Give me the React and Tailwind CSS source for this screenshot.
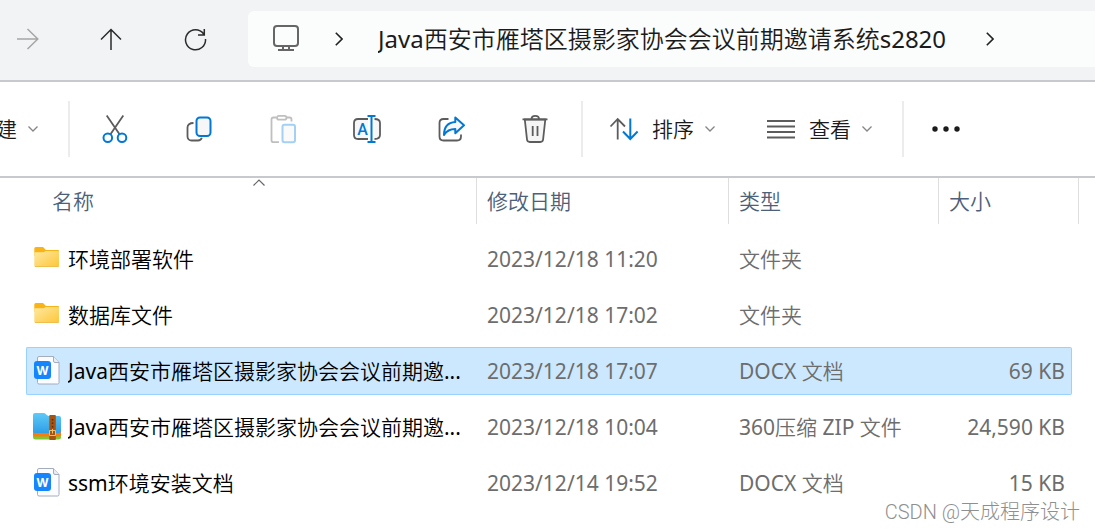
import { useState } from "react";
import clsx from "clsx";

const FolderIcon = () => (
  <svg className="h-[30px] w-7 shrink-0" viewBox="0 0 28 30" fill="none">
    <defs>
      <linearGradient id="folder" x1="0" y1="0" x2="1" y2="1">
        <stop offset="0" stopColor="#ffe9a2" />
        <stop offset="1" stopColor="#fcc638" />
      </linearGradient>
    </defs>
    <path d="M1.300 4.500Q1.300 3 2.800 3H10l3 3h12q1 0 1 1v5H1.300z" fill="#f8b316" />
    <path d="M1.300 9.300q0-1 1-1h8.200L13 7h12q1 0 1 1v13.500q0 1.500-1.500 1.500H2.800q-1.500 0-1.500-1.500z" fill="url(#folder)" />
    <path d="M2 22.500h23.500" stroke="#efbe4d" />
  </svg>
);

const DocxIcon = () => (
  <svg className="h-[30px] w-7 shrink-0" viewBox="0 0 28 30" fill="none">
    <path d="M6 .500h14.500L26 6.500v20q0 1.500-1.500 1.500H6q-1.500 0-1.500-1.500V2Q4.500.500 6 .500z" fill="#fbfcff" stroke="#a4adbd" />
    <path d="M20.500.500V5q0 1.500 1.500 1.500h4" fill="#e8ecf4" stroke="#a4adbd" />
    <rect x="1" y="5" width="17" height="18" rx="3" fill="#1485fc" />
    <text x="9.500" y="18.500" textAnchor="middle" fontFamily="Inter, sans-serif" fontSize="12" fontWeight="700" fill="#fff">
      W
    </text>
  </svg>
);

const ZipIcon = () => (
  <svg className="h-[30px] w-7 shrink-0" viewBox="0 0 28 30" fill="none">
    <defs>
      <linearGradient id="zip" x1="0" y1="0" x2="0" y2="1">
        <stop offset="0" stopColor="#5fc9f8" />
        <stop offset="1" stopColor="#2f9fe6" />
      </linearGradient>
    </defs>
    <path d="M0 19h28v6q0 2.500-2.500 2.500h-23Q0 27.500 0 25z" fill="#7cc934" />
    <path d="M0 17h28v5.500q0 2-2 2H2q-2 0-2-2z" fill="#ff7a0d" />
    <path d="M0 3q0-2 2-2h8.500q1.500 0 2.500 1.300T15.500 4H26q2 0 2 2v13q0 2-2 2H2q-2 0-2-2z" fill="url(#zip)" />
    <rect x="16.300" y="3" width="6.500" height="25" rx=".8" fill="#a8520f" />
    <path d="M19.500 7v9" stroke="#5e2a05" strokeWidth="1.500" strokeDasharray="1.500 2" />
    <path d="M16.500 18.500h6v5h-6zM19.500 17v4.500" stroke="#f4bd63" />
  </svg>
);

const CutIcon = () => (
  <>
    <path d="M5.700.500l13 19M22.300.500l-13 19" />
    <g stroke="#0078d4" strokeWidth="2">
      <circle cx="6.800" cy="22.700" r="4.300" />
      <circle cx="21" cy="22.700" r="4.300" />
    </g>
  </>
);

const CopyIcon = () => (
  <>
    <path d="M8.500 8C4.500 8 2.500 9.500 2.500 12.500v9a4 4 0 0 0 4 4H13c2 0 3.300-1 3.800-2.700" />
    <rect x="11.500" y="2.500" width="14" height="18.500" rx="3.500" fill="#f7f7f7" stroke="#0078d4" strokeWidth="2" />
  </>
);

const PasteIcon = () => (
  <>
    <g stroke="#bfbfbf">
      <path d="M7.500 2.500h-3q-2 0-2 2v20.700q0 2 2 2H10M17.500 2.500h3q2 0 2 2v2" />
      <rect x="8" y=".8" width="9.500" height="3.800" rx="1.900" />
    </g>
    <rect x="13.500" y="9.800" width="12.500" height="17.400" rx="2" fill="#fafafa" stroke="#a3d0f3" strokeWidth="2" />
  </>
);

const RenameIcon = () => (
  <>
    <path d="M15 4H5Q1 4 1 8v12q0 4 4 4h10M21.500 4q5.500 0 5.500 4v12q0 4-5.500 4" fill="#f7f7f7" />
    <path d="M14.500 1h8M14.500 27h8M18.500 1v26" stroke="#0078d4" strokeWidth="2" />
    <text x="9.500" y="19.500" textAnchor="middle" fontFamily="Roboto, sans-serif" fontSize="16" fontWeight="500" fill="#0078d4" stroke="none">
      A
    </text>
  </>
);

const ShareIcon = () => (
  <>
    <path d="M11.500 4H6.500q-4 0-4 4v13.500q0 4 4 4h13.500q4 0 4-4v-2" />
    <path
      d="M18.300 2.500L27 10.300l-8.700 8V14C13 14 9.500 16 7 20C7 12 11 7.500 18.300 7z"
      fill="#f7f7f7"
      stroke="#0078d4"
      strokeWidth="2"
      strokeLinejoin="round"
    />
  </>
);

const DeleteIcon = () => (
  <>
    <path d="M3.800 4.500l2.200 20q.3 2.500 2.800 2.500h10.500q2.500 0 2.800-2.500l2.200-20z" fill="#f5f5f5" />
    <path d="M1.500 4.300h25M10.500 4c0-4.300 7.500-4.300 7.500 0M11.700 11v10M16.500 11v10" />
  </>
);

const ToolIcon = ({ children }) => (
  <svg className="h-7 w-7 shrink-0 overflow-visible" viewBox="0 0 28 28" fill="none" stroke="#5c5c5c" strokeWidth="1.800">
    {children}
  </svg>
);

const ChevronDown = () => (
  <svg className="h-[6px] w-[10px] shrink-0" viewBox="0 0 10 6" fill="none" stroke="#858585" strokeWidth="1.300">
    <path d="M.500.500L5 5L9.500.500" />
  </svg>
);

const ChevronRight = () => (
  <svg className="h-[14px] w-2 shrink-0" viewBox="0 0 8 14" fill="none" stroke="#222" strokeWidth="1.600">
    <path d="M.8.800L7 7L.8 13.200" />
  </svg>
);

const NavIcon = ({ d, className }) => (
  <svg className={clsx("h-6 w-6 shrink-0", className)} viewBox="0 0 24 24" fill="none" stroke="currentColor" strokeWidth="1.500">
    <path d={d} />
  </svg>
);

const Divider = () => <div className="h-14 w-[2px] shrink-0 bg-[#ececec]" />;

const tools = [
  { label: "剪切", icon: CutIcon },
  { label: "复制", icon: CopyIcon },
  { label: "粘贴", icon: PasteIcon, disabled: true },
  { label: "重命名", icon: RenameIcon },
  { label: "共享", icon: ShareIcon },
  { label: "删除", icon: DeleteIcon }
];

const files = [
  { id: 1, name: "环境部署软件", date: "2023/12/18 11:20", type: "文件夹", size: "", icon: FolderIcon },
  { id: 2, name: "数据库文件", date: "2023/12/18 17:02", type: "文件夹", size: "", icon: FolderIcon },
  { id: 3, name: "Java西安市雁塔区摄影家协会会议前期邀...", date: "2023/12/18 17:07", type: "DOCX 文档", size: "69 KB", icon: DocxIcon },
  { id: 4, name: "Java西安市雁塔区摄影家协会会议前期邀...", date: "2023/12/18 10:04", type: "360压缩 ZIP 文件", size: "24,590 KB", icon: ZipIcon },
  { id: 5, name: "ssm环境安装文档", date: "2023/12/14 19:52", type: "DOCX 文档", size: "15 KB", icon: DocxIcon }
];

const AddressBar = () => (
  <nav className="flex items-center border-b-2 border-[#c8c8cf] bg-[#f2f3f5] pt-[11px] pb-[13px]">
    <button type="button" aria-label="前进" disabled className="w-[69px] pl-4 text-[#a6a6a6]">
      <NavIcon d="M1 12h21M11.500 2l10.300 10l-10.300 10" />
    </button>
    <button type="button" aria-label="向上" className="flex w-[84px] justify-center text-[#2b2b2b]">
      <NavIcon d="M12 23V2.500M2 12.500l10-10l10 10" />
    </button>
    <button type="button" aria-label="刷新" className="flex w-[84px] justify-center text-[#2b2b2b]">
      <NavIcon d="M22.500 12A10 10 0 1 1 20.700 7M21.300 2v6H15" />
    </button>
    <div className="ml-[11px] flex h-14 min-w-0 flex-1 items-center rounded-l-md bg-[#fbfcfc] pl-[25px]">
      <button type="button" aria-label="此电脑">
        <svg className="h-7 w-[26px]" viewBox="0 0 26 28" fill="none" stroke="#666" strokeWidth="2">
          <rect x="1" y="1" width="24" height="20" rx="3" />
          <path d="M10 21v4M16 21v4M5 25h16" />
        </svg>
      </button>
      <button type="button" aria-label="展开" className="ml-9">
        <ChevronRight />
      </button>
      <button type="button" className="ml-[35px] truncate text-2xl leading-8 text-[#1b1b1b]">
        Java西安市雁塔区摄影家协会会议前期邀请系统s2820
      </button>
      <button type="button" aria-label="展开子文件夹" className="ml-10">
        <ChevronRight />
      </button>
    </div>
  </nav>
);

const Toolbar = () => (
  <div className="flex h-24 items-center border-b-2 border-[#c8c8cf] bg-white text-[21px] leading-7 text-[#1b1b1b]">
    <button type="button" className="-ml-1 flex w-[72px] shrink-0 items-center gap-[11px]">
      建
      <ChevronDown />
    </button>
    <Divider />
    <div className="flex pr-1 pl-[3px]">
      {tools.map(({ label, icon: Icon, disabled }) => (
        <button key={label} type="button" aria-label={label} disabled={disabled} className="flex w-[84px] justify-center">
          <ToolIcon>
            <Icon />
          </ToolIcon>
        </button>
      ))}
    </div>
    <Divider />
    <button type="button" className="ml-[27px] flex shrink-0 items-center">
      <ToolIcon>
        <path d="M7.700 24.500V4M.500 11.500L7.700 4l7.300 7.500" />
        <path d="M20.300 3.500V24M13 16.500l7.300 7.500l7.300-7.500" stroke="#0078d4" strokeWidth="2" />
      </ToolIcon>
      <span className="mr-[11px] ml-[14px]">排序</span>
      <ChevronDown />
    </button>
    <button type="button" className="ml-[52px] flex shrink-0 items-center">
      <ToolIcon>
        <path d="M0 6h28M0 11.500h28M0 17h28M0 22.500h28" />
      </ToolIcon>
      <span className="mr-[11px] ml-[14px]">查看</span>
      <ChevronDown />
    </button>
    <div className="ml-[30px]">
      <Divider />
    </div>
    <button type="button" aria-label="查看更多" className="ml-7">
      <svg className="h-[6px] w-7" viewBox="0 0 28 6" fill="#1b1b1b">
        <circle cx="3" cy="3" r="2.700" />
        <circle cx="14" cy="3" r="2.700" />
        <circle cx="25" cy="3" r="2.700" />
      </svg>
    </button>
  </div>
);

const HeaderCell = ({ children, className }) => (
  <th scope="col" className={clsx("p-0 pb-[7px] text-left font-normal", className)}>
    <div className="relative h-[46px] border-r border-[#dedede] pt-[9px] pl-[10px]">{children}</div>
  </th>
);

const FileTable = () => {
  const [selectedId, setSelectedId] = useState(3);

  return (
    <table className="w-full table-fixed border-separate border-spacing-0 text-[21px] leading-7">
      <thead className="text-[#4c607a]">
        <tr>
          <HeaderCell>
            <span className="pl-4">名称</span>
            <svg className="absolute top-[1px] left-1/2 ml-[2px] h-[7px] w-3" viewBox="0 0 12 7" fill="none" stroke="#666" strokeWidth="1.200">
              <path d="M.500 6.500L6 1l5.500 5.500" />
            </svg>
          </HeaderCell>
          <HeaderCell className="w-[252px]">修改日期</HeaderCell>
          <HeaderCell className="w-[210px]">类型</HeaderCell>
          <HeaderCell className="w-[140px]">大小</HeaderCell>
        </tr>
      </thead>
      <tbody className="text-[#6d6d6d]">
        {files.map(({ id, name, date, type, size, icon: Icon }) => {
          const cell = clsx(
            "flex h-12 items-center border-y",
            id === selectedId ? "border-[#99d1ff] bg-[#cce8ff]" : "border-transparent"
          );

          return (
            <tr key={id} aria-selected={id === selectedId} onClick={() => setSelectedId(id)}>
              <td className="p-0 py-1">
                <div className={clsx(cell, "gap-[7px] rounded-l-xs border-l pl-[6px] text-black")}>
                  <Icon />
                  <span className="truncate">{name}</span>
                </div>
              </td>
              <td className="p-0 py-1">
                <div className={clsx(cell, "pl-[10px]")}>{date}</div>
              </td>
              <td className="p-0 py-1">
                <div className={clsx(cell, "pl-[10px]")}>{type}</div>
              </td>
              <td className="p-0 py-1 pr-[7px]">
                <div className={clsx(cell, "justify-end rounded-r-xs border-r pr-[6px]")}>{size}</div>
              </td>
            </tr>
          );
        })}
      </tbody>
    </table>
  );
};

export default function App() {
  return (
    <div className="relative min-h-screen overflow-hidden bg-white font-['Noto_Sans','Noto_Sans_CJK_SC_DemiLight','Noto_Sans_CJK_SC_Light','Noto_Sans_CJK_SC',sans-serif]">
      <AddressBar />
      <Toolbar />
      <main className="pr-4 pl-[26px]">
        <FileTable />
      </main>
      <div className="absolute right-[15px] bottom-[5px] font-['Roboto','Noto_Sans_CJK_SC',sans-serif] text-xl leading-7 font-light text-[#8f8f8f]">
        CSDN @天成程序设计
      </div>
    </div>
  );
}
